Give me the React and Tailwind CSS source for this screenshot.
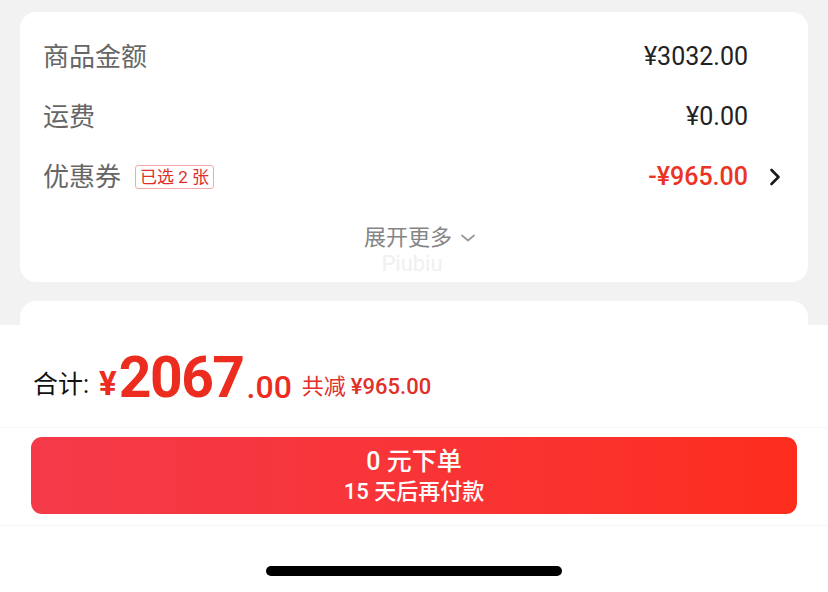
import React from "react";

const font = { fontFamily: "Roboto, 'Noto Sans CJK SC', sans-serif" };

function Row({ label, children, extra }) {
  return (
    <div className="flex h-[60px] items-center">
      <div className="flex flex-1 items-center gap-[14px]">
        <span className="text-[26px] text-[#666666]">{label}</span>
        {extra}
      </div>
      {children}
    </div>
  );
}

export default function App() {
  return (
    <div className="h-[592px] w-[828px] overflow-hidden bg-white" style={font}>
      <div className="flex h-[325px] flex-col bg-[#f2f2f2] px-[20px] pt-[12px]">
        <div className="flex h-[270px] flex-col rounded-[16px] bg-white pl-[23px] pr-[27px] pt-[15px]">
          <Row label="商品金额">
            <span className="text-[25px] text-[#222222]">¥3032.00</span>
            <span className="w-[33px]" />
          </Row>
          <Row label="运费">
            <span className="text-[25px] text-[#222222]">¥0.00</span>
            <span className="w-[33px]" />
          </Row>
          <Row
            label="优惠券"
            extra={
              <span className="flex h-[24px] items-center rounded-[3px] border border-[#f2a9a9] px-[4px] text-[17px] leading-none text-[#e0302a]">
                已选 2 张
              </span>
            }
          >
            <span className="text-[25px] font-medium text-[#ec3324]">-¥965.00</span>
            <span className="flex w-[33px] justify-end">
              <svg width="12" height="20" viewBox="0 0 12 20" fill="none">
                <path d="M2.5 3l7 7-7 7" stroke="#1a1a1a" strokeWidth="2.6" strokeLinecap="round" strokeLinejoin="round" />
              </svg>
            </span>
          </Row>
          <div className="flex h-[60px] flex-col items-center pt-[18px]">
            <div className="flex items-center gap-[8px] pl-[16px]">
              <span className="text-[22px] leading-[26px] text-[#858585]">展开更多</span>
              <svg width="16" height="10" viewBox="0 0 16 10" fill="none">
                <path d="M2 2.5l6 5 6-5" stroke="#999999" strokeWidth="1.8" strokeLinecap="round" strokeLinejoin="round" />
              </svg>
            </div>
            <span className="mt-[1px] text-[22px] leading-[24px] text-[#f0f0f0]">Piubiu</span>
          </div>
        </div>
        <div className="mt-[19px] flex-1 rounded-t-[16px] bg-white" />
      </div>
      <div className="flex h-[103px] items-end border-b border-[#f6f6f6] pb-[21px] pl-[33px]">
        <span className="mb-[3px] text-[25px] text-[#111111]">合计:</span>
        <span className="mb-[2px] ml-[10px] text-[33px] font-bold leading-[40px] text-[#ec2c1e]">¥</span>
        <span className="ml-[2px] text-[57px] font-bold leading-[56px] tracking-[-1.5px] text-[#ec2c1e]">2067</span>
        <span className="mb-[1px] ml-[3px] text-[32px] font-medium leading-[36px] text-[#ec2c1e]">.00</span>
        <span className="mb-[3px] ml-[10px] text-[22px] text-[#e0302a]">共减</span>
        <span className="mb-[3px] ml-[5px] text-[22px] font-medium text-[#e0302a]">¥965.00</span>
      </div>
      <div className="border-b border-[#f6f6f6] px-[31px] pb-[11px] pt-[9px]">
        <div className="flex h-[77px] flex-col items-center justify-center rounded-[11px] bg-gradient-to-r from-[#f43a49] to-[#fd2d1c] text-white">
          <span className="text-[25px] font-medium leading-[32px]">0 元下单</span>
          <span className="text-[22px] font-medium leading-[28px]">15 天后再付款</span>
        </div>
      </div>
      <div className="flex justify-center pt-[40px]">
        <div className="h-[10px] w-[296px] rounded-full bg-black" />
      </div>
    </div>
  );
}
